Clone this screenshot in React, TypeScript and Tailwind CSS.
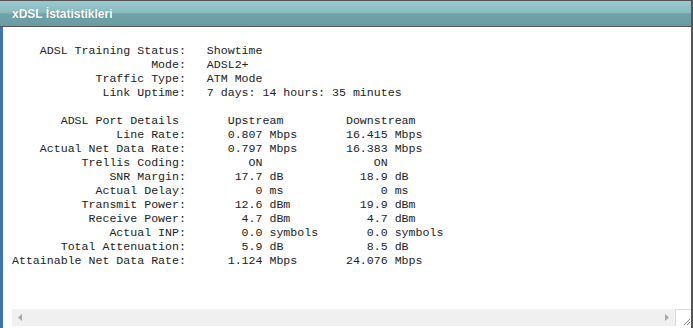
const mono = { fontFamily: '"Liberation Mono", "Courier New", monospace' };

type Row = { label: string; up: string; upUnit: string; down: string; downUnit: string };

const summary: [string, string][] = [
  ['ADSL Training Status:', 'Showtime'],
  ['Mode:', 'ADSL2+'],
  ['Traffic Type:', 'ATM Mode'],
  ['Link Uptime:', '7 days: 14 hours: 35 minutes'],
];

const rows: Row[] = [
  { label: 'Line Rate:', up: '0.807', upUnit: 'Mbps', down: '16.415', downUnit: 'Mbps' },
  { label: 'Actual Net Data Rate:', up: '0.797', upUnit: 'Mbps', down: '16.383', downUnit: 'Mbps' },
  { label: 'Trellis Coding:', up: 'ON', upUnit: '', down: 'ON', downUnit: '' },
  { label: 'SNR Margin:', up: '17.7', upUnit: 'dB', down: '18.9', downUnit: 'dB' },
  { label: 'Actual Delay:', up: '0', upUnit: 'ms', down: '0', downUnit: 'ms' },
  { label: 'Transmit Power:', up: '12.6', upUnit: 'dBm', down: '19.9', downUnit: 'dBm' },
  { label: 'Receive Power:', up: '4.7', upUnit: 'dBm', down: '4.7', downUnit: 'dBm' },
  { label: 'Actual INP:', up: '0.0', upUnit: 'symbols', down: '0.0', downUnit: 'symbols' },
  { label: 'Total Attenuation:', up: '5.9', upUnit: 'dB', down: '8.5', downUnit: 'dB' },
  { label: 'Attainable Net Data Rate:', up: '1.124', upUnit: 'Mbps', down: '24.076', downUnit: 'Mbps' },
];

function buildText() {
  const lines: string[] = [];
  summary.forEach(([k, v]) => lines.push(k.padStart(25) + '   ' + v));
  lines.push('');
  lines.push('ADSL Port Details'.padStart(24) + '       Upstream' + '         Downstream');
  rows.forEach(r => {
    const upUnit = r.upUnit ? ' ' + r.upUnit : '';
    const downUnit = r.downUnit ? ' ' + r.downUnit : '';
    lines.push(r.label.padStart(25) + r.up.padStart(11) + upUnit.padEnd(12) + r.down.padStart(6) + downUnit);
  });
  return lines.join('\n');
}

export default function App() {
  return (
    <div className="w-[693px] h-[328px] flex flex-col bg-white border-r-2 border-[#555]">
      <div
        className="h-[27px] shrink-0 border-t border-b border-[#555] flex items-center pl-3 bg-[linear-gradient(to_bottom,#9acacf_0%,#8abbc1_45%,#6fa2a9_52%,#6a9ca3_100%)]"
      >
        <span
          className="text-white font-bold text-[12px] leading-none [text-shadow:0_0_1px_rgba(60,90,95,0.6)]"
          style={{ fontFamily: '"Liberation Sans", Arial, sans-serif' }}
        >
          xDSL İstatistikleri
        </span>
      </div>
      <div className="flex-1 flex min-h-0">
        <div className="w-[3px] bg-[#3d74b6] shrink-0" />
        <div className="flex-1 flex flex-col">
          <div className="flex-1 pl-[9px] pt-[17px]">
            <pre className="text-[11.6px] leading-[14px] text-[#222] m-0" style={mono}>
              {buildText()}
            </pre>
          </div>
          <div className="h-[17px] flex ml-[9px] mb-[2px]">
            <div className="flex-1 bg-[#f0f0f0] flex items-center justify-between px-[6px]">
              <svg width="4" height="7" viewBox="0 0 4 7">
                <path d="M4 0 L0 3.5 L4 7 Z" fill="#a6a6a6" />
              </svg>
              <svg width="4" height="7" viewBox="0 0 4 7">
                <path d="M0 0 L4 3.5 L0 7 Z" fill="#a6a6a6" />
              </svg>
            </div>
            <div className="w-[16px] bg-white border-l border-t border-[#dcdcdc] flex items-end justify-end">
              <svg width="10" height="10" viewBox="0 0 10 10">
                <path d="M9 3 L3 9 M9 6 L6 9" stroke="#808080" strokeWidth="1" />
              </svg>
            </div>
          </div>
        </div>
      </div>
    </div>
  );
}
